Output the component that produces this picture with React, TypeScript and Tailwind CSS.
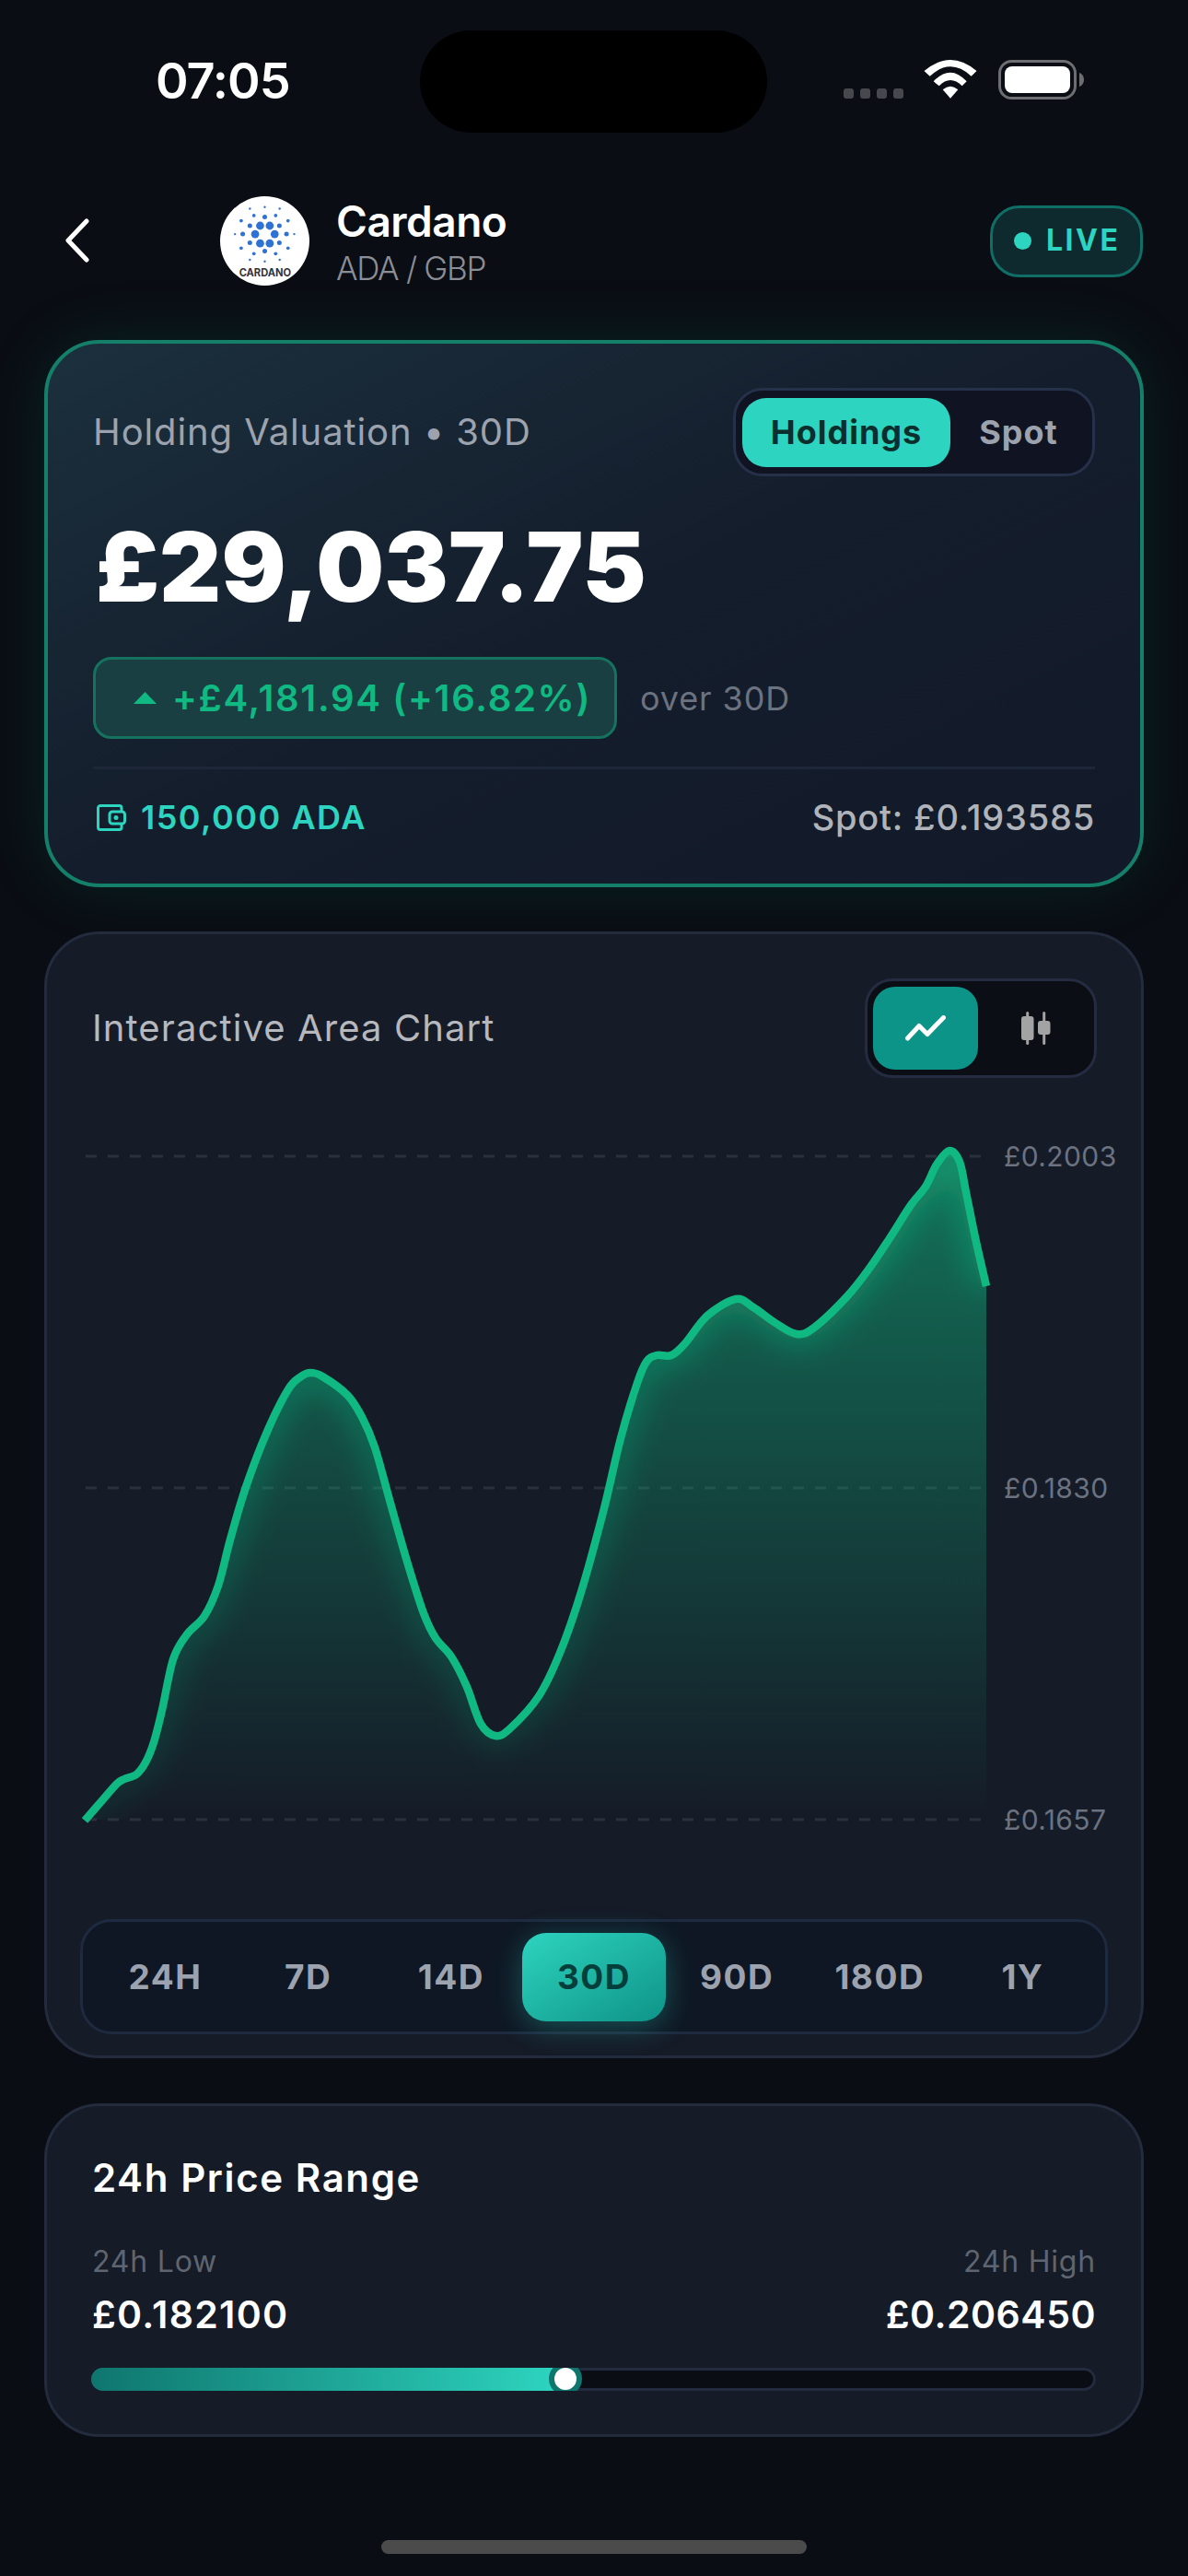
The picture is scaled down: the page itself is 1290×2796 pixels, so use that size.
const FONT = "font-['Inter','Liberation_Sans',sans-serif]";

// curve traced from the reference, page coordinates
const PTS: [number, number][] = [
  [92, 1975], [112, 1952], [127, 1935], [135, 1930], [148, 1925], [158, 1912], [167, 1890], [176, 1855],
  [188, 1800], [203, 1773], [222, 1753], [237, 1720], [250, 1670], [267, 1613], [290, 1553], [313, 1507],
  [327, 1493], [337, 1489], [350, 1493], [377, 1513], [393, 1537], [407, 1570], [423, 1627], [443, 1697],
  [460, 1750], [473, 1777], [490, 1797], [507, 1830], [522, 1870], [538, 1883], [554, 1875], [585, 1840],
  [608, 1793], [631, 1727], [655, 1640], [674, 1560], [692, 1500], [702, 1477], [713, 1470], [729, 1470],
  [744, 1457], [768, 1427], [799, 1409], [818, 1418], [842, 1435], [865, 1447], [884, 1440], [919, 1407],
  [943, 1377], [966, 1343], [989, 1307], [1005, 1287], [1017, 1263], [1031, 1248], [1042, 1260], [1049, 1293],
  [1060, 1347], [1071, 1395],
];

// chart svg origin on the page
const OX = 88;
const OY = 1240;

function buildLine() {
  const p = PTS.map(([x, y]) => [x - OX, y - OY]);
  let d = `M${p[0][0]} ${p[0][1]}`;
  for (let i = 0; i < p.length - 1; i++) {
    const a = p[Math.max(i - 1, 0)];
    const b = p[i];
    const c = p[i + 1];
    const e = p[Math.min(i + 2, p.length - 1)];
    const c1x = b[0] + (c[0] - a[0]) / 6;
    const c1y = b[1] + (c[1] - a[1]) / 6;
    const c2x = c[0] - (e[0] - b[0]) / 6;
    const c2y = c[1] - (e[1] - b[1]) / 6;
    d += ` C${c1x.toFixed(1)} ${c1y.toFixed(1)} ${c2x.toFixed(1)} ${c2y.toFixed(1)} ${c[0]} ${c[1]}`;
  }
  return d;
}

function AreaChart() {
  const line = buildLine();
  const area = `${line} L${1071 - OX} ${1974 - OY} L${92 - OX} ${1974 - OY} Z`;
  const gridY = [1254 - OY, 1614 - OY, 1974 - OY];
  return (
    <svg viewBox="0 0 1000 750" className="block w-[1000px] h-[750px]">
      <defs>
        <linearGradient id="areaFill" gradientUnits="userSpaceOnUse" x1="0" y1="8" x2="0" y2="734">
          <stop offset="0" stopColor="#10b981" stopOpacity="0.55" />
          <stop offset="1" stopColor="#10b981" stopOpacity="0" />
        </linearGradient>
        <linearGradient id="glowFade" gradientUnits="userSpaceOnUse" x1="0" y1="8" x2="0" y2="734">
          <stop offset="0" stopColor="#10b981" stopOpacity="0.55" />
          <stop offset="1" stopColor="#10b981" stopOpacity="0.12" />
        </linearGradient>
        <clipPath id="areaClip">
          <path d={area} />
        </clipPath>
        <filter id="lineBlur" x="-10%" y="-10%" width="120%" height="120%">
          <feGaussianBlur stdDeviation="16" />
        </filter>
      </defs>
      {gridY.map((y) => (
        <line key={y} x1="5" x2="978" y1={y} y2={y} stroke="#2a303c" strokeWidth="3" strokeDasharray="12 12" />
      ))}
      <path d={area} fill="url(#areaFill)" />
      <g clipPath="url(#areaClip)">
        <path d={line} fill="none" stroke="url(#glowFade)" strokeWidth="24" filter="url(#lineBlur)" />
      </g>
      <path d={line} fill="none" stroke="#10b981" strokeWidth="8.5" strokeLinejoin="round" />
    </svg>
  );
}

function WifiIcon() {
  return (
    <svg viewBox="0 0 58 42" className="w-[58px] h-[42px]" fill="#fff">
      <path d="M0.5 12Q29 -12 57.5 12L51.7 17.7Q29 -3 6.7 17.7Z" />
      <path d="M10.7 23.3Q29 4 46.7 23.3L41.7 28.3Q29 15.5 16.7 28.3Z" />
      <path d="M20.7 32.3Q29 25 37.3 32.3L29 41.7Z" />
    </svg>
  );
}

function BatteryIcon() {
  return (
    <svg viewBox="0 0 94 43" className="w-[94px] h-[43px]">
      <rect x="1.5" y="1.5" width="82" height="40" rx="13" fill="none" stroke="#6d6e72" strokeWidth="3" />
      <rect x="7" y="7" width="71" height="29" rx="8" fill="#fff" />
      <path d="M88 14C91 15 93 18 93 21.5C93 25 91 28 88 29Z" fill="#6d6e72" />
    </svg>
  );
}

function CardanoLogo() {
  const big = [[248, 163], [279, 163], [232, 190], [295, 190], [248, 220], [279, 220]];
  const mid = [[215, 163], [310, 163], [192, 190], [333, 190], [215, 218], [310, 218], [263, 135], [263, 245]];
  const small = [[228, 130], [298, 130], [228, 253], [298, 253], [187, 147], [338, 147], [187, 235], [338, 235]];
  const tiny = [[263, 103], [215, 108], [311, 108], [167, 190], [358, 190], [215, 273], [263, 278], [311, 273]];
  return (
    <div className="w-[97px] h-[97px] rounded-full bg-white overflow-hidden shrink-0">
      <svg viewBox="119 68 288 288" className="w-full h-full">
        {big.map(([x, y]) => <circle key={`${x}-${y}`} cx={x} cy={y} r="13" fill="#2f72d6" />)}
        {mid.map(([x, y]) => <circle key={`${x}-${y}`} cx={x} cy={y} r="7.5" fill="#2f72d6" />)}
        {small.map(([x, y]) => <circle key={`${x}-${y}`} cx={x} cy={y} r="5.5" fill="#2f72d6" />)}
        {tiny.map(([x, y]) => <circle key={`${x}-${y}`} cx={x} cy={y} r="3.5" fill="#2f72d6" />)}
        <text x="264" y="326" textAnchor="middle" fontSize="33" fontWeight="700" fill="#33343a" fontFamily="Inter, sans-serif">CARDANO</text>
      </svg>
    </div>
  );
}

const RANGES = ["24H", "7D", "14D", "30D", "90D", "180D", "1Y"];

export default function App() {
  return (
    <div className={`${FONT} relative w-[1290px] h-[2796px] bg-[#0a0d14] overflow-hidden text-white`}>
      {/* status bar */}
      <div className="flex pt-[33px] h-[144px]">
        <div className="w-[456px] pl-[169px] pt-[22px]">
          <span className="block text-[54px] leading-[66px] font-semibold tracking-[-1px]">07:05</span>
        </div>
        <div className="w-[377px] h-[111px] rounded-[56px] bg-black" />
        <div className="flex items-start pt-[32px] pl-[83px]">
          <div className="flex gap-[7px] mt-[31px]">
            {[0, 1, 2, 3].map((i) => (
              <div key={i} className="w-[11px] h-[11px] rounded-[3px] bg-[#47484d]" />
            ))}
          </div>
          <div className="ml-[22px]"><WifiIcon /></div>
          <div className="ml-[23px]"><BatteryIcon /></div>
        </div>
      </div>

      {/* header */}
      <div className="flex items-center mt-[69px] h-[97px] pl-[70px] pr-[49px]">
        <svg viewBox="0 0 28 48" className="w-[28px] h-[48px] -mt-[2px] shrink-0 text-white" fill="none" stroke="currentColor" strokeWidth="5" strokeLinecap="round" strokeLinejoin="round">
          <path d="M24 3L4 24L24 45" />
        </svg>
        <div className="ml-[141px]"><CardanoLogo /></div>
        <div className="ml-[29px] flex flex-col">
          <span className="text-[46px] leading-[52px] font-semibold tracking-[-0.5px] mt-[3px]">Cardano</span>
          <span className="text-[35px] leading-[44px] mt-[3px] font-light text-[#8b8e94] tracking-[-1.3px]">ADA / GBP</span>
        </div>
        <div className="ml-auto flex items-center gap-[16px] w-[166px] h-[78px] pl-[23px] rounded-[32px] bg-[#0f2a2e] border-[3px] border-[#0f6e66]">
          <div className="w-[19px] h-[19px] rounded-full bg-[#2dd4bf]" />
          <span className="text-[32px] leading-none font-bold text-[#2dd4bf] tracking-[2.5px] -mt-[2px]">LIVE</span>
        </div>
      </div>

      {/* holding card */}
      <div className="mx-[48px] mt-[59px] h-[594px] rounded-[60px] border-[4px] border-[#15806a] bg-gradient-to-br from-[#1b303d] via-[#141d2c] to-[#121a29] shadow-[0_0_70px_rgba(16,185,129,0.13)] px-[49px] pt-[48px]">
        <div className="flex items-center justify-between">
          <span className="text-[40px] leading-[46px] text-[#9ca3af] tracking-[0.9px]">Holding Valuation • 30D</span>
          <div className="flex items-center w-[393px] h-[96px] rounded-[32px] border-[3px] border-[#253049] bg-[#0f1322] pl-[7px]">
            <div className="flex items-center justify-center w-[226px] h-[75px] rounded-[26px] bg-[#2dd4bf] text-[36px] font-bold text-[#0a2f2d] tracking-[1px]">Holdings</div>
            <div className="flex-1 text-center text-[36px] font-bold text-[#9ca3af] tracking-[1px] pr-[6px]">Spot</div>
          </div>
        </div>
        <div className="mt-[36px] ml-[3px] text-[104px] leading-[124px] font-black tracking-[0.2px]">£29,037.75</div>
        <div className="flex items-center mt-[36px]">
          <div className="flex items-center w-[569px] h-[89px] rounded-[20px] border-[3px] border-[#14725f] bg-[#1a3f42] pl-[41px]">
            <svg viewBox="0 0 25 13" className="w-[25px] h-[13px]" fill="#10b981">
              <path d="M12.5 0L25 13H0Z" />
            </svg>
            <span className="ml-[17px] text-[40px] leading-none font-semibold text-[#10b981] tracking-[1.7px]">+£4,181.94 (+16.82%)</span>
          </div>
          <span className="ml-[25px] text-[36px] text-[#6b7280] tracking-[0.9px]">over 30D</span>
        </div>
        <div className="h-[3px] mt-[30px] bg-[#1e2737]" />
        <div className="flex items-center justify-between mt-[30px]">
          <div className="flex items-center ml-[4px]">
            <svg viewBox="0 0 32 29" className="w-[32px] h-[29px] text-[#2dd4bf]" fill="none" stroke="currentColor" strokeWidth="3" strokeLinejoin="round">
              <path d="M27 8V4a2.5 2.5 0 0 0-2.5-2.5H4A2.5 2.5 0 0 0 1.500 4v21A2.500 2.500 0 0 0 4 27.500h20.500A2.500 2.500 0 0 0 27 25v-4" />
              <rect x="14" y="8" width="16.500" height="13" rx="3" />
              <circle cx="21" cy="14.500" r="2.500" fill="currentColor" stroke="none" />
            </svg>
            <span className="ml-[16px] text-[36px] leading-[44px] font-semibold text-[#2dd4bf] tracking-[1.5px]">150,000 ADA</span>
          </div>
          <span className="text-[38px] leading-[44px] font-medium text-[#b0b4ba] tracking-[0.8px]">Spot: £0.193585</span>
        </div>
      </div>

      {/* chart card */}
      <div className="relative mx-[48px] mt-[48px] h-[1223px] rounded-[60px] border-[3px] border-[#232b3d] bg-[#151b27] pt-[48px]">
        <div className="flex items-center justify-between pl-[49px] pr-[48px]">
          <span className="text-[40px] leading-[46px] text-[#b5b8bd] tracking-[1.1px]">Interactive Area Chart</span>
          <div className="flex items-center w-[252px] h-[108px] rounded-[30px] border-[3px] border-[#252c41] bg-[#0b0e15] pl-[6px]">
            <div className="flex items-center justify-center w-[114px] h-[90px] rounded-[24px] bg-[#0d9488]">
              <svg viewBox="0 0 44 28" className="w-[44px] h-[28px]" fill="none" stroke="#fff" strokeWidth="5" strokeLinecap="round" strokeLinejoin="round">
                <path d="M2.500 25L15 11.500L24 20.500L41.500 2.500" />
              </svg>
            </div>
            <div className="flex-1 flex justify-center">
              <svg viewBox="0 0 32 36" className="w-[32px] h-[36px]" fill="#a3a3a3">
                <rect x="5.200" y="0" width="3" height="36" rx="1.500" />
                <rect x="0" y="5" width="13.500" height="26" rx="3" />
                <rect x="23.200" y="0" width="3" height="36" rx="1.500" />
                <rect x="18" y="10" width="13.500" height="15" rx="3" />
              </svg>
            </div>
          </div>
        </div>
        {/* chart: svg plus the axis labels that sit on it */}
        <div className="relative mt-[71px] ml-[37px]">
          <AreaChart />
          <span className="absolute left-[1002px] top-[-4px] text-[30px] leading-[36px] text-[#6b7280] tracking-[0.4px]">£0.2003</span>
          <span className="absolute left-[1002px] top-[356px] text-[30px] leading-[36px] text-[#6b7280] tracking-[0.4px]">£0.1830</span>
          <span className="absolute left-[1002px] top-[716px] text-[30px] leading-[36px] text-[#6b7280] tracking-[0.4px]">£0.1657</span>
        </div>
        <div className="mx-[36px] mt-[92px] h-[125px] rounded-[34px] border-[3px] border-[#1e2a3f] bg-[#0f1724] px-[12px] grid grid-cols-7 items-center">
          {RANGES.map((r) =>
            r === "30D" ? (
              <div key={r} className="flex items-center justify-center h-[96px] rounded-[26px] bg-gradient-to-br from-[#2dd4bf] to-[#0d9488] shadow-[0_6px_32px_rgba(45,212,191,0.32)] text-[37px] font-bold text-[#053f3b] tracking-[1.5px]">
                {r}
              </div>
            ) : (
              <div key={r} className="text-center text-[37px] font-bold text-[#9ca3af] tracking-[1.5px]">{r}</div>
            )
          )}
        </div>
      </div>

      {/* price range card */}
      <div className="mx-[48px] mt-[49px] h-[362px] rounded-[60px] border-[3px] border-[#232b3d] bg-[#151b27] px-[49px] pt-[54px]">
        <div className="text-[42px] leading-[48px] font-semibold tracking-[1.6px]">24h Price Range</div>
        <div className="flex justify-between mt-[48px]">
          <span className="text-[32px] leading-[38px] text-[#5f6570] tracking-[0.8px]">24h Low</span>
          <span className="text-[32px] leading-[38px] text-[#5f6570] tracking-[0.8px]">24h High</span>
        </div>
        <div className="flex justify-between mt-[14px]">
          <span className="text-[41px] leading-[48px] font-semibold tracking-[1.3px]">£0.182100</span>
          <span className="text-[41px] leading-[48px] font-semibold tracking-[0.5px]">£0.206450</span>
        </div>
        {/* track: the outer box clips the fill and the knob ring to the bar's height */}
        <div className="relative h-[25px] -ml-[1px] mt-[34px] rounded-full overflow-hidden">
          <div className="absolute inset-0 rounded-full border-[3px] border-[#232b3f] bg-[#0a0d14]" />
          <div className="absolute left-0 top-0 h-[25px] w-[505px] bg-gradient-to-r from-[#0f766e] to-[#2dd4bf]" />
          <div className="absolute left-[497px] -top-[6px] w-[36px] h-[36px] rounded-full bg-white border-[6px] border-[#0f766e]" />
        </div>
      </div>

      {/* home indicator */}
      <div className="w-[462px] h-[15px] mx-auto mt-[112px] rounded-full bg-[#4b4b4b]" />
    </div>
  );
}
